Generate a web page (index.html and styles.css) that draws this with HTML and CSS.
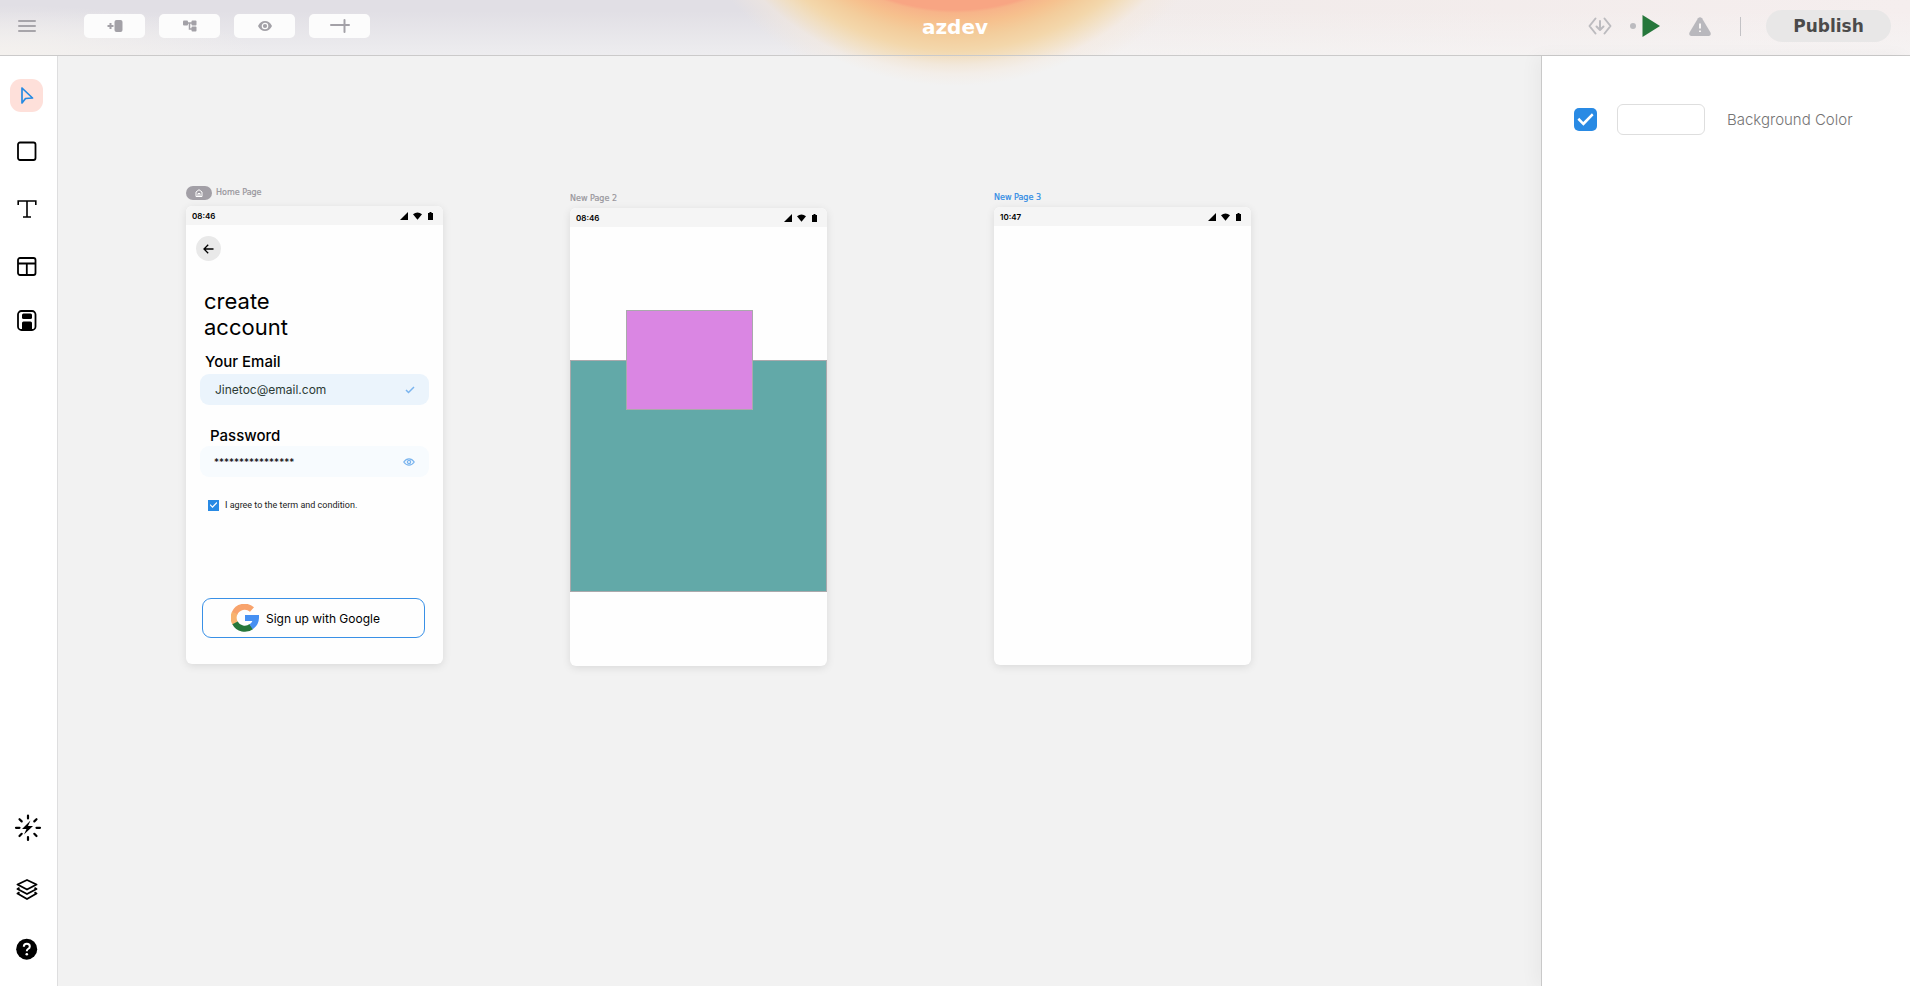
FILE: index.html
```html
<!DOCTYPE html>
<html lang="en">
<head>
<meta charset="utf-8">
<title>azdev</title>
<link rel="stylesheet" href="styles.css">
</head>
<body>
<svg class="sprite" aria-hidden="true">
  <symbol id="status-icons" viewBox="0 0 34 10">
    <path d="M0 9 8 1v8z"/>
    <path d="M13 3.200q4.500-3.400 9 0L17.500 8.800z"/>
    <path d="M29.500 1h2v1h1.500v7h-5V2h1.500z"/>
  </symbol>
</svg>
<div class="app">
  <header class="topbar">
    <div class="topbar-left">
      <button class="icon-button menu" aria-label="Menu">
        <svg width="18" height="14" viewBox="0 0 18 14"><path d="M1 2h16M1 7h16M1 12h16" stroke="#a7a5aa" stroke-width="2" stroke-linecap="round"/></svg>
      </button>
      <nav class="actions" aria-label="Page actions">
        <button class="action" aria-label="Add page">
          <svg width="16" height="12" viewBox="0 0 16 12" fill="#a3a1a7"><path d="M2.500 3h2v2h2v2h-2v2h-2V7h-2V5h2z"/><rect x="7.500" width="8" height="12" rx="2"/></svg>
        </button>
        <button class="action" aria-label="Component tree">
          <svg width="14" height="12" viewBox="0 0 14 12"><g fill="#a3a1a7"><rect y="0.500" width="5" height="5" rx="1"/><rect x="8.500" y="0.500" width="5" height="5" rx="1"/><rect x="8.500" y="6.500" width="5" height="5" rx="1"/></g><path d="M4 3h5M6.500 3v6H9" fill="none" stroke="#a3a1a7" stroke-width="1.500"/></svg>
        </button>
        <button class="action" aria-label="Preview">
          <svg width="14" height="10" viewBox="0 0 14 10"><path d="M0 5Q2.500 0 7 0t7 5q-2.500 5-7 5T0 5z" fill="#a3a1a7"/><circle cx="7" cy="5" r="2.700" fill="none" stroke="#fcfcfc" stroke-width="1.200"/></svg>
        </button>
        <button class="action" aria-label="Add">
          <svg width="20" height="14" viewBox="0 0 20 14"><path d="M1 6h18M14.500 1v12" stroke="#a3a1a7" stroke-width="2" stroke-linecap="round"/></svg>
        </button>
      </nav>
    </div>
    <h1 class="brand">azdev</h1>
    <div class="topbar-right">
      <button class="icon-button" aria-label="Export code">
        <svg width="24" height="18" viewBox="0 0 24 18" fill="none" stroke="#bcbbbf" stroke-width="2" stroke-linecap="round" stroke-linejoin="round"><path d="M7.500 1.500 1.500 9l6 7.500M16.500 1.500l6 7.500-6 7.500M12 4v8.500M8.500 9.500 12 13l3.500-3.500"/></svg>
      </button>
      <button class="icon-button run" aria-label="Run">
        <svg width="30" height="22" viewBox="0 0 30 22"><circle cx="3" cy="11" r="3" fill="#bcbbbf"/><path d="M12.500 0 30 11 12.500 22z" fill="#26773b"/></svg>
      </button>
      <button class="icon-button warn" aria-label="Warnings">
        <svg width="22" height="19" viewBox="0 0 22 19"><path d="M9 1.200q2-2 4 0l8.500 14.300q1 3-1.500 3.500H2q-2.500-.5-1.500-3.500z" fill="#b9b8bd"/><path d="M11 6.500v5M11 13.500v1.500" stroke="#f7f4f4" stroke-width="2"/></svg>
      </button>
      <span class="divider"></span>
      <button class="publish">Publish</button>
    </div>
  </header>

  <div class="workspace">
    <aside class="rail">
      <button class="tool active" aria-label="Select">
        <svg viewBox="0 0 33 33"><path d="M12 9v15l3.500-4.500 7-.5z" fill="none" stroke="#268ae2" stroke-width="1.700" stroke-linejoin="round"/></svg>
      </button>
      <button class="tool" aria-label="Rectangle">
        <svg viewBox="0 0 33 33"><rect x="8" y="6.500" width="17.500" height="17.500" rx="2" fill="none" stroke="#000" stroke-width="1.800"/></svg>
      </button>
      <button class="tool" aria-label="Text">
        <svg viewBox="0 0 33 33"><path d="M8.200 12V8h17.600v4M17 8v16M13 24h8" fill="none" stroke="#000" stroke-width="1.600"/></svg>
      </button>
      <button class="tool" aria-label="Layout">
        <svg viewBox="0 0 33 33"><rect x="8" y="8" width="17.500" height="17" rx="2" fill="none" stroke="#000" stroke-width="1.800"/><path d="M8 13.500h17.500M16.800 13.500V25" stroke="#000" stroke-width="1.800"/></svg>
      </button>
      <button class="tool" aria-label="Save">
        <svg viewBox="0 0 33 33"><rect x="8" y="4" width="17.500" height="19" rx="3.500" fill="none" stroke="#000" stroke-width="1.800"/><rect x="12" y="6.500" width="10" height="5.500" rx="1.500"/><path d="M12 22.500V16q0-1.500 1.500-1.500h7Q22 14.500 22 16v6.500z"/></svg>
      </button>
      <span class="rail-space"></span>
      <button class="tool" aria-label="Actions">
        <svg viewBox="0 0 33 33"><path d="M20.500 9.500 12 18h4.500l-2.500 5.500 9-8.500h-5z"/><path d="M18 4.500v3M18 26v3M6 16.800h3.500M26.500 16.800H30M9.500 8.200l2.200 2.200M24.300 22.800l2.200 2.200M26.500 8.200l-2.200 2.200M11.700 22.800 9.500 25" stroke="#000" stroke-width="2.200" stroke-linecap="round"/></svg>
      </button>
      <button class="tool" aria-label="Layers">
        <svg viewBox="0 0 33 33" fill="none" stroke="#000" stroke-width="1.900" stroke-linejoin="round"><path d="m17 8 9.500 4.500L17 17.500l-9.500-5z"/><path d="m9.500 15.800-2 1.200L17 22l9.500-5-2-1.200M9.500 20.300l-2 1.200L17 27l9.500-5.500-2-1.200"/></svg>
      </button>
      <button class="tool" aria-label="Help">
        <svg viewBox="0 0 33 33"><circle cx="16.700" cy="16.200" r="10.500"/><path d="M13.800 13.700q0-3 3-3t3 2.700q0 1.600-1.800 2.600-1.200.8-1.200 2.300" fill="none" stroke="#fff" stroke-width="2"/><circle cx="16.800" cy="21.300" r="1.300" fill="#fff"/></svg>
      </button>
    </aside>

    <main class="canvas">
      <section class="page page-home">
        <h2 class="page-title"><span class="home-badge"><svg width="8" height="8" viewBox="0 0 8 8"><path d="M1 7.500V3L4 .7 7 3v4.500zM3 7V4.500h2V7" fill="none" stroke="#fff" stroke-width="1"/></svg></span>Home Page</h2>
        <div class="screen">
          <div class="status"><time>08:46</time><svg width="34" height="10"><use href="#status-icons"/></svg></div>
          <form class="signup">
            <button class="back" type="button" aria-label="Back"><svg width="11" height="10" viewBox="0 0 11 10"><path d="M10.500 5H1.200M5.200.8 1 5l4.200 4.200" fill="none" stroke="#000" stroke-width="1.300"/></svg></button>
            <h3 class="heading">create<br>account</h3>
            <label class="field-label" for="email">Your Email</label>
            <div class="field email-field">
              <input id="email" type="email" value="Jinetoc@email.com">
              <svg width="10" height="8" viewBox="0 0 10 8"><path d="m1 4 2.500 2.500L9 1" fill="none" stroke="#7ab4ee" stroke-width="1.500"/></svg>
            </div>
            <label class="field-label password-label" for="password">Password</label>
            <div class="field password-field">
              <input id="password" type="text" value="****************">
              <svg width="12" height="8" viewBox="0 0 12 8" fill="none" stroke="#7ab4ee" stroke-width="1.300"><path d="M.8 4Q3 .8 6 .8T11.200 4Q9 7.200 6 7.200T.8 4z"/><circle cx="6" cy="4" r="1.600"/></svg>
            </div>
            <div class="terms"><input class="check" id="terms" type="checkbox" checked><label for="terms">I agree to the term and condition.</label></div>
            <button class="google" type="button">
              <svg width="28" height="28" viewBox="0 0 28 28" fill="none" stroke-width="6"><path d="M3.500 9.500A11 11 0 0 1 21 5.600" stroke="#f8a36c"/><path d="M4.200 19.200A11 11 0 0 1 3.700 9" stroke="#f8b36f"/><path d="M20.500 22.500A11 11 0 0 1 4 18.800" stroke="#26773b"/><path d="M14 14h11a11 11 0 0 1-5 8.800" stroke="#4690f2"/></svg>
              Sign up with Google
            </button>
          </form>
        </div>
      </section>

      <section class="page page-two">
        <h2 class="page-title">New Page 2</h2>
        <div class="screen">
          <div class="status"><time>08:46</time><svg width="34" height="10"><use href="#status-icons"/></svg></div>
          <div class="shape teal"></div>
          <div class="shape pink"></div>
        </div>
      </section>

      <section class="page page-three">
        <h2 class="page-title selected">New Page 3</h2>
        <div class="screen">
          <div class="status"><time>10:47</time><svg width="34" height="10"><use href="#status-icons"/></svg></div>
        </div>
      </section>
    </main>

    <aside class="panel">
      <div class="property">
        <input class="check" id="bg" type="checkbox" checked>
        <button class="swatch" aria-label="Pick color"></button>
        <label for="bg">Background Color</label>
      </div>
    </aside>
  </div>
</div>
</body>
</html>
```
FILE: styles.css
```css
* { box-sizing: border-box; }
body { margin: 0; font-family: Inter, "Liberation Sans", sans-serif; color: #000; }
button { border: 0; padding: 0; background: none; font: inherit; color: inherit; display: flex; align-items: center; justify-content: center; }
h1, h2, h3 { margin: 0; }
svg { display: block; flex: none; }
.sprite { position: absolute; width: 0; height: 0; }

.app { min-height: 100vh; display: flex; flex-direction: column; }

/* Top bar */
.topbar {
  display: grid;
  grid-template-columns: 1fr auto 1fr;
  height: 56px;
  border-bottom: 1px solid #cbcaca;
  background:
    radial-gradient(circle at 50% -198px, #f8a583 208px, #f7b489 211px, #f6c18e 222px, #f3cd9c 234px, #f3d7ab 248px, rgba(243, 222, 188, .85) 260px, rgba(244, 232, 220, .5) 276px, rgba(244, 240, 240, 0) 300px) padding-box,
    radial-gradient(ellipse 260px 50px at 0 100%, #f4f1ee, rgba(244, 241, 238, 0)),
    linear-gradient(rgba(246, 246, 246, 0) 20%, rgba(246, 246, 246, .6)),
    linear-gradient(90deg, #e1dfe5 44%, #f1ebea 58%, #f5eeee);
}
.topbar-left { display: flex; align-items: center; padding: 0 0 4px 18px; gap: 48px; }
.actions { display: flex; gap: 14px; }
.action { width: 61px; height: 24px; border-radius: 5px; background: #fcfcfc; }
.brand { align-self: center; padding-bottom: 2px; font: bold 20px/24px "DejaVu Sans", sans-serif; color: #fff; }
.topbar-right { display: flex; align-items: center; justify-content: flex-end; padding: 0 19px 3px 0; }
.run { margin-left: 18px; }
.warn { margin-left: 29px; }
.divider { width: 1px; height: 19px; margin: 0 25px 0 29px; background: #c3c2c5; }
.publish { width: 125px; height: 32px; border-radius: 16px; background: #e8e7e7; color: #4b4b4b; font: bold 17px/20px "DejaVu Sans", sans-serif; }

/* Workspace */
.workspace {
  flex: 1;
  display: flex;
  background: radial-gradient(circle at 50% -254px, #f1dfc3 254px, #f2e8db 263px, #f3eee9 272px, #f2f2f2 284px);
}
.rail { width: 58px; padding: 23px 0 20px 10px; border-right: 1px solid #dededf; background: #fff; display: flex; flex-direction: column; gap: 24px; }
.tool { width: 33px; height: 33px; border-radius: 11px; }
.tool svg { width: 33px; height: 33px; }
.tool.active { background: #fee0da; }
.rail-space { flex: 1; }
.rail-space ~ .tool { margin-top: 4px; }
.panel { width: 369px; border-left: 1px solid #c9c9c9; background: #fff; box-shadow: -6px 0 16px rgba(0, 0, 0, .04); }
.property { display: flex; align-items: center; padding: 48px 32px; }
.property label { margin-left: 22px; font-size: 15px; font-weight: 300; color: #747474; }
.property .check { width: 23px; height: 23px; border-radius: 5px; }
.swatch { width: 88px; height: 31px; margin-left: 20px; border: 1px solid #dedede; border-radius: 6px; background: #fff; }

.check {
  appearance: none;
  width: 11px;
  height: 11px;
  margin: 0;
  background: #298ae4;
  display: grid;
  place-items: center;
}
.check:checked::before {
  content: "";
  width: 70%;
  height: 55%;
  background: #fff;
  clip-path: polygon(0 52%, 11% 37%, 36% 70%, 90% 0, 100% 16%, 37% 100%);
}

/* Artboards on the free canvas */
.canvas { flex: 1; position: relative; }
.page { position: absolute; width: 257px; }
.page-home { left: 128px; top: 130px; }
.page-two { left: 512px; top: 132px; }
.page-three { left: 936px; top: 131px; }
.page-title { height: 20px; padding-top: 2px; display: flex; align-items: center; gap: 4px; font: 8px/14px "DejaVu Sans", sans-serif; color: #98969c; -webkit-text-stroke: 0.2px; }
.page-home .page-title { height: 20px; padding: 0 0 6px; line-height: 16px; }
.page-title.selected { color: #2c8ae4; }
.home-badge { width: 26px; height: 14px; border-radius: 7px; background: #a29fa6; display: grid; place-items: center; }
.screen { position: relative; height: 458px; border-radius: 6px; background: #fefefe; box-shadow: 0 2px 9px rgba(0, 0, 0, .1); overflow: hidden; }
.status { height: 19px; padding: 0 9px 0 6px; background: #f5f5f5; display: flex; align-items: center; justify-content: space-between; font-size: 8px; font-weight: 600; line-height: 18px; }

.shape { position: absolute; border: 1px solid #aaa9ac; }
.teal { left: 0; right: 0; top: 152px; height: 232px; background: #62a9a8; }
.pink { left: 56px; top: 102px; width: 127px; height: 100px; background: #da86e3; }

/* Sign-up form */
.signup { padding: 11px 14px; display: flex; flex-direction: column; }
.back { width: 25px; height: 25px; margin-left: -4px; border-radius: 50%; background: #e9e9e9; }
.heading { margin: 27px 0 0 4px; font-size: 22px; font-weight: 400; line-height: 26px; }
.field-label { margin: 12px 0 0 5px; font-size: 15px; font-weight: 500; line-height: 20px; }
.field { display: flex; align-items: center; justify-content: space-between; height: 31px; padding: 0 14px 0 15px; border-radius: 9px; background: #ebf4fc; }
.field input { flex: 1; min-width: 0; border: 0; padding: 0; background: none; font: 12px/16px Inter, sans-serif; color: #2b3a35; }
.email-field { margin-top: 2px; }
.password-label { margin: 21px 0 0 10px; }
.password-field { margin-top: 0; padding-left: 14px; background: #f7fbfe; }
.password-field input { font-size: 10px; color: #000; }
.terms { display: flex; align-items: center; gap: 6px; margin: 20px 0 0 8px; font: 9px/16px Roboto, sans-serif; color: #222; }
.google { height: 40px; margin: 85px 4px 0 2px; padding-right: 16px; gap: 7px; border: 1px solid #3990e6; border-radius: 9px; font-size: 12px; }
```
